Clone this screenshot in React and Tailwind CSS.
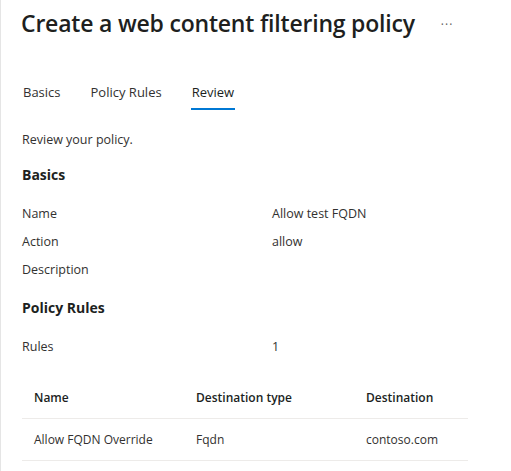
const basics = [
  { label: 'Name', value: 'Allow test FQDN' },
  { label: 'Action', value: 'allow' },
  { label: 'Description', value: '' },
];

const tabs = ['Basics', 'Policy Rules', 'Review'];

export default function App() {
  return (
    <div className="w-[511px] h-[471px] bg-white border-l border-[#e5e5e5] overflow-hidden text-[#323130] font-['Open_Sans',sans-serif]">
      {/* Header */}
      <div className="flex items-center pl-5 pt-[6px] h-[40px]">
        <h1 className="text-[23px] font-semibold text-[#201f1e] tracking-[-0.2px]">Create a web content filtering policy</h1>
        <span className="ml-[26px] mt-[4px] text-[12px] tracking-[1px] text-[#605e5c]">···</span>
      </div>

      {/* Tabs */}
      <div className="flex gap-[28px] pl-[21px] mt-[43px] text-[13px]">
        {tabs.map((t) => (
          <div key={t} className={`px-[1px] pb-[5px] border-b-2 ${t === 'Review' ? 'border-[#0078d4] text-[#201f1e]' : 'border-transparent text-[#323130]'}`}>
            {t}
          </div>
        ))}
      </div>

      <div className="pl-[21px] pr-[43px] text-[12.5px]">
        <p className="mt-[21px]">Review your policy.</p>

        <h2 className="mt-[15px] text-[14px] font-bold text-[#201f1e]">Basics</h2>
        <div className="mt-[19px] flex flex-col gap-[8px]">
          {basics.map((r) => (
            <div key={r.label} className="grid grid-cols-[250px_1fr] h-[20px] items-center">
              <span>{r.label}</span>
              <span>{r.value}</span>
            </div>
          ))}
        </div>

        <h2 className="mt-[17px] text-[14px] font-bold text-[#201f1e]">Policy Rules</h2>
        <div className="mt-[20px] grid grid-cols-[250px_1fr]">
          <span>Rules</span>
          <span>1</span>
        </div>

        <div className="mt-[20px] text-[12px]">
          <div className="grid grid-cols-[162px_170px_1fr] pl-3 h-[42px] items-center border-b border-[#edebe9] font-semibold text-[#201f1e]">
            <span>Name</span>
            <span>Destination type</span>
            <span>Destination</span>
          </div>
          <div className="grid grid-cols-[162px_170px_1fr] pl-3 h-[42px] items-center border-b border-[#edebe9]">
            <span>Allow FQDN Override</span>
            <span>Fqdn</span>
            <span>contoso.com</span>
          </div>
        </div>
      </div>
    </div>
  );
}
